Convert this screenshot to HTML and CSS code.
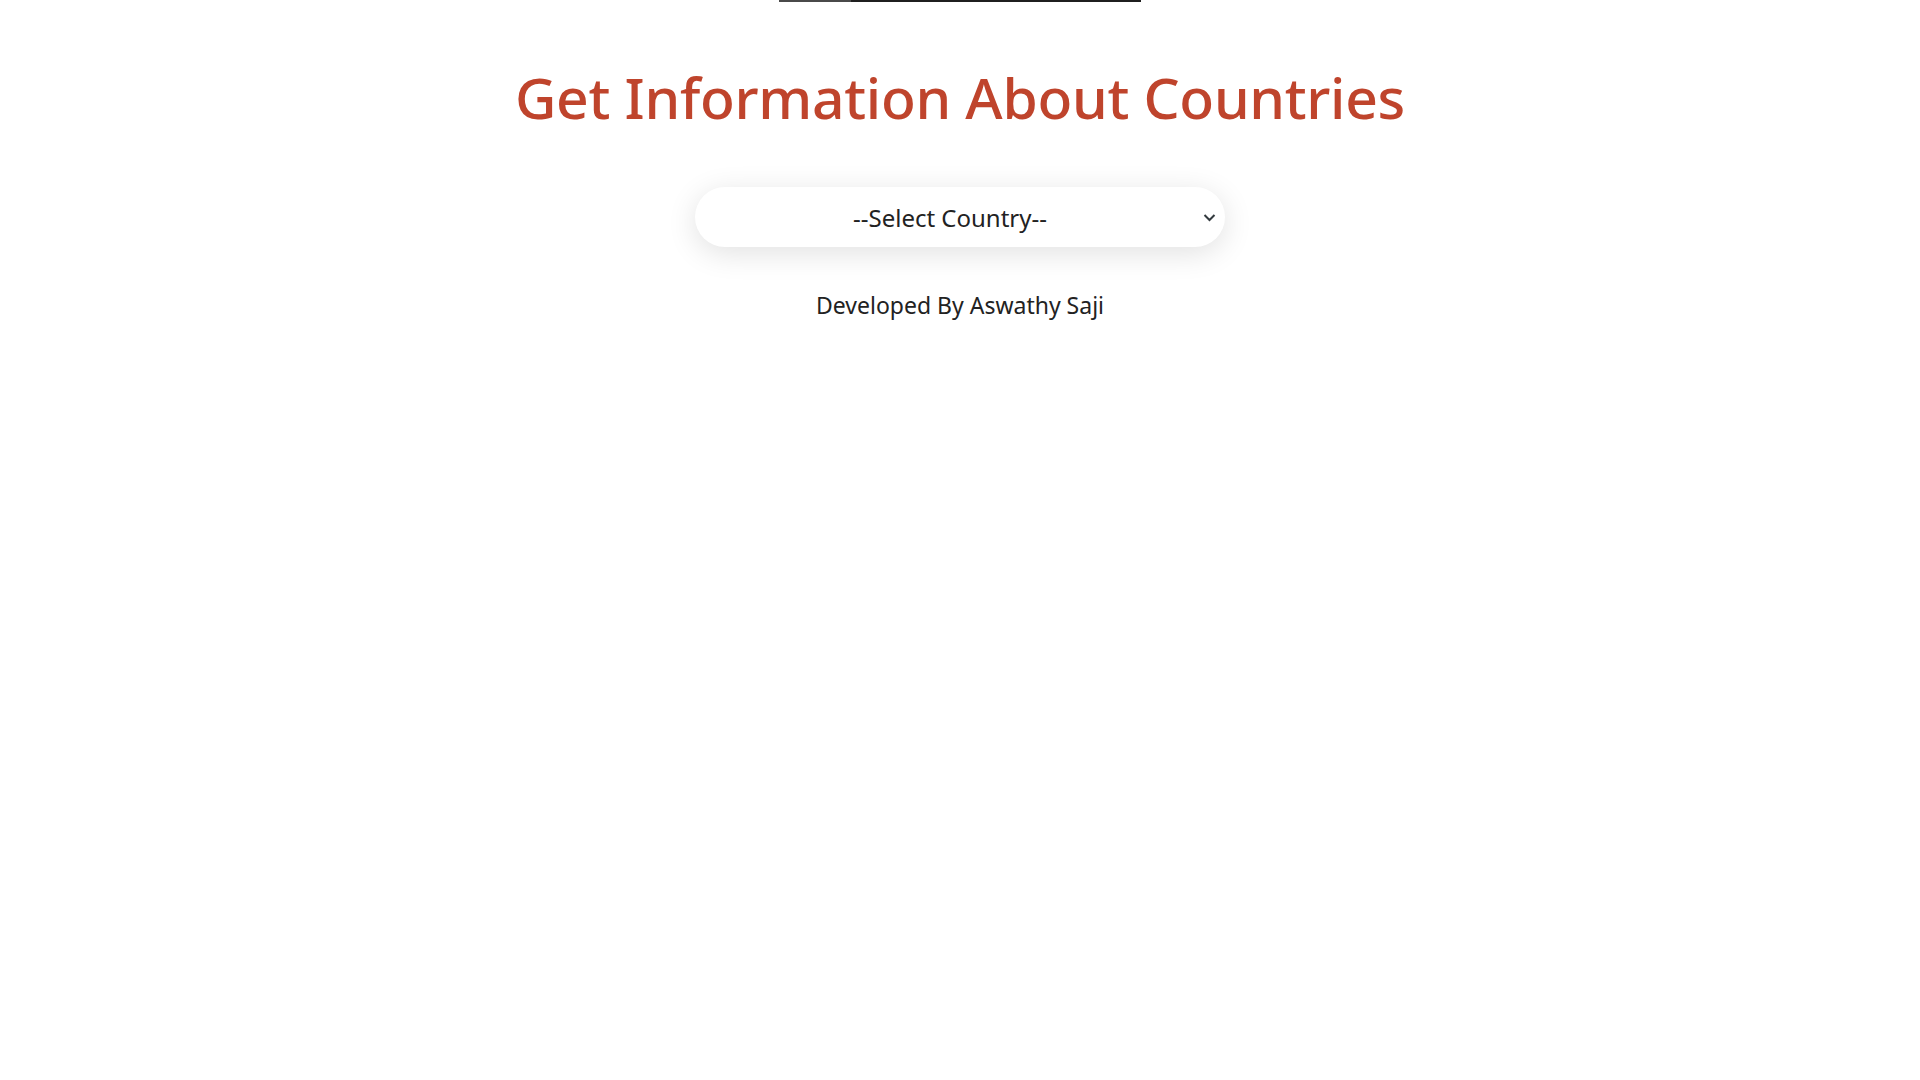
FILE: index.html
```html
<!DOCTYPE html>
<html lang="en">
<head>
<meta charset="utf-8">
<title>Countries</title>
<link rel="stylesheet" href="styles.css">
</head>
<body>
<div class="topbar"><span class="thumb"></span><span class="rest"></span></div>
<main class="page">
  <h1 class="title">Get Information About Countries</h1>
  <div class="select-wrap">
    <div class="select">
      <span class="select-text">--Select Country--</span>
      <svg class="chev" width="13" height="9" viewBox="0 0 13 9"><path d="M1.5 2 L6.5 7 L11.5 2" fill="none" stroke="#333a3f" stroke-width="2"/></svg>
    </div>
  </div>
  <p class="credit">Developed By Aswathy Saji</p>
</main>
</body>
</html>
```
FILE: styles.css
```css
html, body { margin: 0; padding: 0; background: #fff; }
body { font-family: "Noto Sans", "Open Sans", sans-serif; }
.topbar { display: flex; width: 362px; height: 2px; margin: 0 auto; }
.thumb { width: 72px; background: #4a4a4a; }
.rest { flex: 1; background: #1f1f1f; }
.page { display: flex; flex-direction: column; align-items: center; }
.title { margin: 58px 0 0; font-size: 57px; font-weight: 500; color: #bf442c; line-height: 74px; letter-spacing: -0.3px; }
.select-wrap { margin-top: 53px; }
.select { position: relative; width: 530px; height: 60px; border-radius: 30px; background: #fff; box-shadow: 0 6px 30px rgba(0,0,0,0.12); display: flex; align-items: center; justify-content: center; }
.select-text { font-size: 24px; color: #222; margin-left: -20px; }
.chev { position: absolute; right: 9px; top: 26px; }
.credit { margin: 42px 0 0; font-size: 23px; color: #222; }
```
